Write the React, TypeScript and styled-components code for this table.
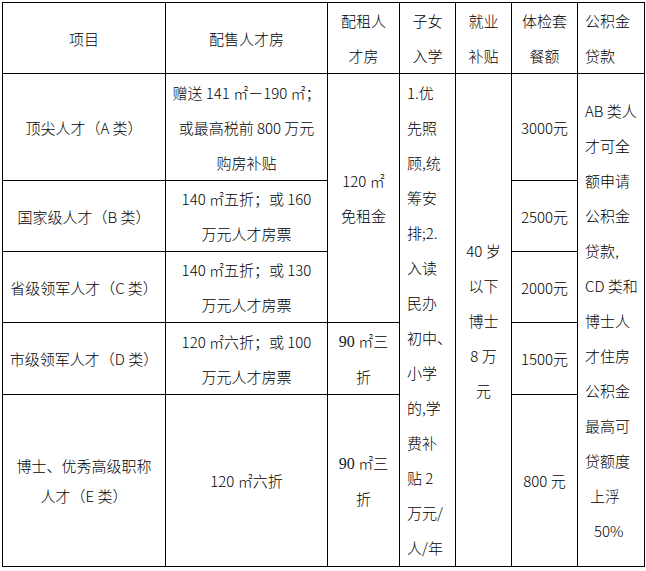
import React from "react";
import styled, { createGlobalStyle } from "styled-components";

const GlobalStyle = createGlobalStyle`
  html, body {
    margin: 0;
    padding: 0;
    background: #fff;
  }
  body {
    font-family: "Noto Sans CJK SC", "Noto Sans", sans-serif;
    color: #000;
  }
`;

const Page = styled.div`
  padding: 2px;
`;

const Table = styled.table`
  border-collapse: collapse;
  table-layout: fixed;
  width: 642px;
  font-size: 15px;
`;

const Row = styled.tr<{ $h: number }>`
  height: ${(p) => p.$h}px;
`;

const Cell = styled.td<{ $align?: "left" | "center"; $lh?: number }>`
  border: 1px solid #000;
  padding: 0 0 0 ${(p) => (p.$align === "left" ? 7 : 0)}px;
  text-align: ${(p) => p.$align ?? "center"};
  vertical-align: middle;
  line-height: ${(p) => p.$lh ?? 35}px;
  white-space: nowrap;
  font-weight: 300;
`;

const HeadCell = styled(Cell).attrs({ as: "th" })``;

const Line = styled.span<{ $indent?: number }>`
  display: block;
  padding-left: ${(p) => p.$indent ?? 0}px;
`;

// "90" 在原文中是另一种字体
const Num = styled.span`
  font-family: "Liberation Serif", serif;
  font-size: 16px;
  font-weight: 400;
  color: #10182a;
`;

const lines = (items: string[]) =>
  items.map((t, i) => <Line key={i}>{t}</Line>);

function App() {
  return (
    <>
      <GlobalStyle />
      <Page>
        <Table>
          <colgroup>
            <col style={{ width: 163 }} />
            <col style={{ width: 162 }} />
            <col style={{ width: 72 }} />
            <col style={{ width: 56 }} />
            <col style={{ width: 56 }} />
            <col style={{ width: 66 }} />
            <col style={{ width: 67 }} />
          </colgroup>
          <thead>
            <Row $h={71}>
              <HeadCell>项目</HeadCell>
              <HeadCell>配售人才房</HeadCell>
              <HeadCell>{lines(["配租人", "才房"])}</HeadCell>
              <HeadCell>{lines(["子女", "入学"])}</HeadCell>
              <HeadCell>{lines(["就业", "补贴"])}</HeadCell>
              <HeadCell>{lines(["体检套", "餐额"])}</HeadCell>
              <HeadCell $align="left">{lines(["公积金", "贷款"])}</HeadCell>
            </Row>
          </thead>
          <tbody>
            <Row $h={107}>
              <Cell>顶尖人才（A 类）</Cell>
              <Cell>
                {lines(["赠送 141 ㎡－190 ㎡；", "或最高税前 800 万元", "购房补贴"])}
              </Cell>
              <Cell rowSpan={3}>{lines(["120 ㎡", "免租金"])}</Cell>
              <Cell rowSpan={5} $align="left">
                {lines([
                  "1.优",
                  "先照",
                  "顾,统",
                  "筹安",
                  "排;2.",
                  "入读",
                  "民办",
                  "初中、",
                  "小学",
                  "的,学",
                  "费补",
                  "贴 2",
                  "万元/",
                  "人/年",
                ])}
              </Cell>
              <Cell rowSpan={5}>
                {lines(["40 岁", "以下", "博士", "8 万", "元"])}
              </Cell>
              <Cell>3000元</Cell>
              <Cell rowSpan={5} $align="left">
                {lines([
                  "AB 类人",
                  "才可全",
                  "额申请",
                  "公积金",
                  "贷款,",
                  "CD 类和",
                  "博士人",
                  "才住房",
                  "公积金",
                  "最高可",
                  "贷额度",
                ])}
                <Line $indent={5}>上浮</Line>
                <Line $indent={9}>50%</Line>
              </Cell>
            </Row>
            <Row $h={70}>
              <Cell>国家级人才（B 类）</Cell>
              <Cell>{lines(["140 ㎡五折；或 160", "万元人才房票"])}</Cell>
              <Cell>2500元</Cell>
            </Row>
            <Row $h={71}>
              <Cell>省级领军人才（C 类）</Cell>
              <Cell>{lines(["140 ㎡五折；或 130", "万元人才房票"])}</Cell>
              <Cell>2000元</Cell>
            </Row>
            <Row $h={71}>
              <Cell>市级领军人才（D 类）</Cell>
              <Cell>{lines(["120 ㎡六折；或 100", "万元人才房票"])}</Cell>
              <Cell>
                <Line>
                  <Num>90</Num> ㎡三
                </Line>
                <Line>折</Line>
              </Cell>
              <Cell>1500元</Cell>
            </Row>
            <Row $h={172}>
              <Cell $lh={30}>{lines(["博士、优秀高级职称", "人才（E 类）"])}</Cell>
              <Cell>120 ㎡六折</Cell>
              <Cell>
                <Line>
                  <Num>90</Num> ㎡三
                </Line>
                <Line>折</Line>
              </Cell>
              <Cell>800 元</Cell>
            </Row>
          </tbody>
        </Table>
      </Page>
    </>
  );
}

export default App;
